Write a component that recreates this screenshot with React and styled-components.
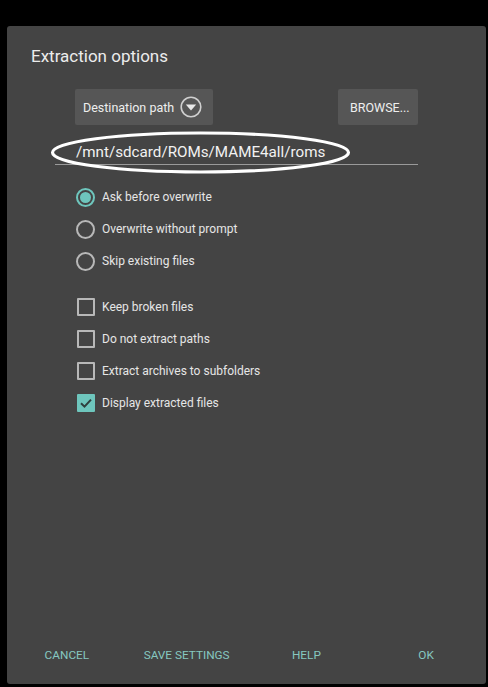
import React from 'react';
import styled, { createGlobalStyle } from 'styled-components';

const GlobalStyle = createGlobalStyle`
  html, body {
    margin: 0;
    padding: 0;
    background: #000;
  }
  body {
    font-family: Roboto, "Liberation Sans", sans-serif;
  }
`;

const Screen = styled.div`
  width: 488px;
  height: 687px;
  padding: 26px 2px 0 7px;
  box-sizing: border-box;
  background: #000;
`;

const Dialog = styled.div`
  position: relative;
  width: 479px;
  height: 658px;
  background: #444444;
  border-radius: 3px;
  display: flex;
  flex-direction: column;
`;

const Title = styled.div`
  color: #ececec;
  font-size: 17px;
  line-height: 20px;
  padding: 20px 24px 0;
`;

const Body = styled.div`
  flex: 1;
  margin: 23px 68px 0 48px;
`;

const ButtonRow = styled.div`
  display: flex;
  justify-content: space-between;
  padding-left: 20px;
`;

const FlatButton = styled.div`
  height: 36px;
  width: ${({ w }) => w}px;
  box-sizing: border-box;
  background: #565656;
  border-radius: 2px;
  display: flex;
  align-items: center;
  padding-left: ${({ pad }) => pad}px;
  color: #eeeeee;
  font-size: 12.5px;
  gap: 6px;
`;

const PathField = styled.div`
  position: relative;
  margin-top: 13px;
  height: 24px;
  padding: 2px 0 0 21px;
  color: #f2f2f2;
  font-size: 15.2px;
  line-height: 24px;
  border-bottom: 1px solid #9a9a9a;
`;

const Ellipse = styled.svg`
  position: absolute;
  left: -4px;
  top: -7px;
  width: 299px;
  height: 43px;
  overflow: visible;
`;

const OptionGroup = styled.div`
  display: flex;
  flex-direction: column;
  padding-left: 21px;
  margin-top: ${({ top }) => top}px;
`;

const OptionRow = styled.div`
  height: 32px;
  display: flex;
  align-items: center;
  gap: 7px;
  color: #e6e6e6;
  font-size: 12px;
`;

const Radio = styled.span`
  width: 19px;
  height: 19px;
  box-sizing: border-box;
  border-radius: 50%;
  border: 2px solid ${({ on }) => (on ? '#6ec6bd' : '#b8b8b8')};
  display: flex;
  align-items: center;
  justify-content: center;
  &::after {
    content: '';
    width: 11px;
    height: 11px;
    border-radius: 50%;
    background: ${({ on }) => (on ? '#6ec6bd' : 'transparent')};
  }
`;

const Check = styled.span`
  width: 18px;
  height: 18px;
  margin-left: 1px;
  box-sizing: border-box;
  border-radius: 1px;
  border: 2px solid ${({ on }) => (on ? '#6ec6bd' : '#b8b8b8')};
  background: ${({ on }) => (on ? '#6ec6bd' : 'transparent')};
  display: flex;
  align-items: center;
  justify-content: center;
`;

const Footer = styled.div`
  display: grid;
  grid-template-columns: repeat(4, 1fr);
  height: 50px;
  padding-bottom: 4px;
  align-items: center;
`;

const FooterButton = styled.div`
  text-align: center;
  color: #86c8c0;
  font-size: 11.8px;
`;

const DropIcon = () => (
  <svg width="22" height="22" viewBox="0 0 22 22">
    <circle cx="11" cy="11" r="9.8" fill="none" stroke="#cfcfcf" strokeWidth="1.6" />
    <path d="M5.8 8.6 L16.2 8.6 L11 14.4 Z" fill="#e8e8e8" />
  </svg>
);

const Tick = () => (
  <svg width="14" height="14" viewBox="0 0 14 14">
    <path d="M2 7.2 L5.5 10.6 L12 3.6" fill="none" stroke="#2f3f3e" strokeWidth="2" />
  </svg>
);

const radios = [
  { label: 'Ask before overwrite', on: true },
  { label: 'Overwrite without prompt', on: false },
  { label: 'Skip existing files', on: false },
];

const checks = [
  { label: 'Keep broken files', on: false },
  { label: 'Do not extract paths', on: false },
  { label: 'Extract archives to subfolders', on: false },
  { label: 'Display extracted files', on: true },
];

const App = () => {
  return (
    <Screen>
      <GlobalStyle />
      <Dialog>
        <Title>Extraction options</Title>
        <Body>
          <ButtonRow>
            <FlatButton w={138} pad={8}>
              Destination path
              <DropIcon />
            </FlatButton>
            <FlatButton w={80} pad={12}>BROWSE...</FlatButton>
          </ButtonRow>
          <PathField>
            /mnt/sdcard/ROMs/MAME4all/roms
            <Ellipse viewBox="0 0 299 43">
              <ellipse cx="149.5" cy="21.5" rx="148" ry="19.5" fill="none" stroke="#ffffff" strokeWidth="3.2" />
            </Ellipse>
          </PathField>
          <OptionGroup top={16}>
            {radios.map((r) => (
              <OptionRow key={r.label}>
                <Radio on={r.on} />
                {r.label}
              </OptionRow>
            ))}
          </OptionGroup>
          <OptionGroup top={14}>
            {checks.map((c) => (
              <OptionRow key={c.label}>
                <Check on={c.on}>{c.on && <Tick />}</Check>
                {c.label}
              </OptionRow>
            ))}
          </OptionGroup>
        </Body>
        <Footer>
          <FooterButton>CANCEL</FooterButton>
          <FooterButton>SAVE SETTINGS</FooterButton>
          <FooterButton>HELP</FooterButton>
          <FooterButton>OK</FooterButton>
        </Footer>
      </Dialog>
    </Screen>
  );
};

export default App;
